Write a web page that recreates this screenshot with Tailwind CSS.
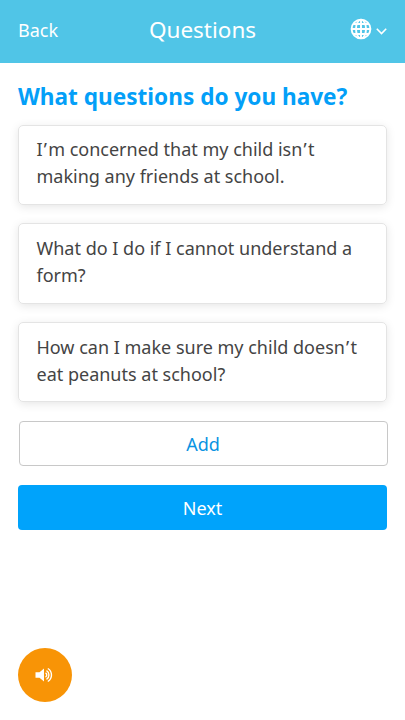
<!DOCTYPE html>
<html lang="en">
<head>
    <meta charset="UTF-8">
    <meta name="viewport" content="width=device-width, initial-scale=1.0">
    <title>Questions</title>
    <script src="https://cdn.jsdelivr.net/npm/@tailwindcss/browser@4"></script>
</head>
<body class="h-screen overflow-hidden bg-white font-['Noto_Sans',sans-serif] flex flex-col">

    <header class="h-[63px] shrink-0 bg-[#50c5e7] text-white grid grid-cols-3 items-center px-[18px] pb-[2px]">
        <a href="#" class="text-[18px]">Back</a>
        <h1 class="text-[22.5px] text-center pb-[2px]">Questions</h1>
        <button class="flex items-center justify-end gap-1" aria-label="Language">
            <svg class="w-[22px] h-[22px] -mt-[3px]" viewBox="0 0 22 22" fill="none" stroke="currentColor" stroke-width="1.9">
                <circle cx="11" cy="11" r="9.4"/>
                <ellipse cx="11" cy="11" rx="5" ry="9.4"/>
                <path d="M11 1.5v19M1.5 11h19M3.5 6h15M3.5 16h15"/>
            </svg>
            <svg class="w-[11px] h-[7px] mt-[2px]" viewBox="0 0 11 7" fill="none" stroke="currentColor" stroke-width="1.6">
                <path d="M.8.8l4.7 4.7L10.2.8"/>
            </svg>
        </button>
    </header>

    <main class="grow px-[18px] pt-[18px]">
        <h2 class="text-[22.6px] leading-[32px] font-bold text-[#039ff8] mb-[11.7px]">What questions do you have?</h2>

        <div class="space-y-[18.4px] text-[18px] leading-[27px] text-[#444]">
            <div class="h-[80.3px] rounded-[5px] border border-[#e4e4e4] shadow-[0_2px_10px_rgba(0,0,0,0.1)] px-[17.5px] pt-[10.6px]">I<span class="px-[1.2px]">’</span>m concerned that my child isn<span class="px-[1.2px]">’</span>t making any friends at school.</div>
            <div class="h-[80.3px] rounded-[5px] border border-[#e4e4e4] shadow-[0_2px_10px_rgba(0,0,0,0.1)] px-[17.5px] pt-[10.6px]">What do I do if I cannot understand a form?</div>
            <div class="h-[80.3px] rounded-[5px] border border-[#e4e4e4] shadow-[0_2px_10px_rgba(0,0,0,0.1)] px-[17.5px] pt-[10.6px]">How can I make sure my child doesn<span class="px-[1.2px]">’</span>t eat peanuts at school?</div>
        </div>

        <button class="mt-[18.6px] ml-[1px] w-full h-[45px] rounded-[4px] border border-[#c8c8c8] pt-[2px] pr-[1px] text-[18px] text-[#0a93e2]">Add</button>
        <button class="mt-[19px] w-full h-[45px] rounded-[4px] bg-[#00a3fb] pt-[2px] text-[18px] text-white">Next</button>
    </main>

    <footer class="px-[18px] pb-[18px]">
        <button class="w-[54px] h-[54px] rounded-full bg-[#f89406] text-white flex items-center justify-center" aria-label="Listen">
            <svg class="w-[18px] h-[16px] -ml-[3px]" viewBox="0 0 18 16">
                <path fill="currentColor" d="M.5 5.2h4L9 1.500v13L4.500 10.800h-4z"/>
                <path fill="none" stroke="currentColor" stroke-width="1.400" d="M10.500 6a2.200 2.200 0 0 1 0 4M11.500 3.700a5 5 0 0 1 0 8.600M12.800 1.500a7.600 7.600 0 0 1 0 13"/>
            </svg>
        </button>
    </footer>

</body>
</html>
